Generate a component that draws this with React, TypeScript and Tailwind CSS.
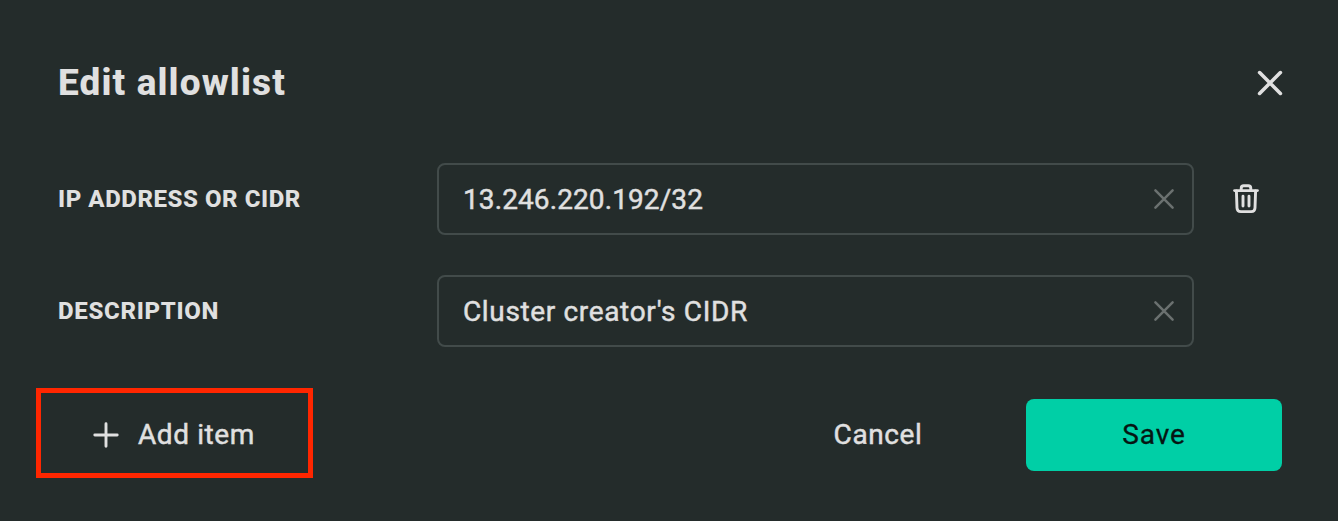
import React from "react";

function Cross({ size, reach, width, className }: { size: number; reach: number; width: number; className: string }) {
  const a = size / 2 - reach;
  const b = size / 2 + reach;
  return (
    <svg width={size} height={size} viewBox={`0 0 ${size} ${size}`} fill="none" stroke="currentColor" strokeWidth={width} strokeLinecap="round" className={className}>
      <path d={`M${a} ${a}L${b} ${b}M${b} ${a}L${a} ${b}`} />
    </svg>
  );
}

function Trash() {
  return (
    <svg width="32" height="32" viewBox="0 0 32 32" fill="none" stroke="currentColor" strokeWidth="2.9" strokeLinecap="round" strokeLinejoin="round">
      <path d="M4.6 7.6H27.4" />
      <path d="M11.2 7V5.4Q11.2 2.7 13.8 2.7H18.2Q20.8 2.7 20.8 5.4V7" />
      <path d="M6.4 8L7 25Q7.2 28.6 10.8 28.6H21.2Q24.8 28.6 25 25L25.6 8" />
      <path d="M13 13.2V23M19 13.2V23" />
    </svg>
  );
}

function Field({ label, labelSpacing, value, valueSpacing, removable }: { label: string; labelSpacing: string; value: string; valueSpacing: string; removable?: boolean }) {
  return (
    <div className="flex h-[72px] items-center">
      <div className={`w-[379px] text-2xl font-extrabold whitespace-nowrap ${labelSpacing}`}>{label}</div>
      <div className="flex h-[72px] w-[757px] items-center justify-between rounded-lg border-2 border-[#424b4a] pr-[14px] pl-6">
        <span className={`pt-0.5 text-[28px] leading-9 whitespace-nowrap [-webkit-text-stroke:0.45px] ${valueSpacing}`}>{value}</span>
        <Cross size={28} reach={8.6} width={2.5} className="text-[#6b7170]" />
      </div>
      {removable && (
        <button className="ml-9 flex">
          <Trash />
        </button>
      )}
    </div>
  );
}

export default function App() {
  return (
    <div className="flex h-[521px] w-[1338px] flex-col bg-[#242c2b] pr-14 pl-[58px] font-[Roboto,sans-serif] text-[#e0e0e0]">
      <header className="mt-[59px] flex h-12 items-center justify-between">
        <h1 className="text-[37px] font-extrabold tracking-[1.12px] whitespace-nowrap">Edit allowlist</h1>
        <button className="-mr-1">
          <Cross size={32} reach={10.4} width={3.6} className="block" />
        </button>
      </header>
      <main className="mt-14 flex flex-col gap-10">
        <Field label="IP ADDRESS OR CIDR" labelSpacing="tracking-[0.56px]" value="13.246.220.192/32" valueSpacing="tracking-[0.1px]" removable />
        <Field label="DESCRIPTION" labelSpacing="tracking-[0.7px]" value="Cluster creator's CIDR" valueSpacing="tracking-[0.65px]" />
      </main>
      <footer className="mt-[52px] flex h-[72px] items-center text-[28px]">
        <button className="relative flex h-[72px] w-[232px] items-center pl-[34px]">
          <svg width="28" height="28" viewBox="0 0 28 28" stroke="currentColor" strokeWidth="2.9" strokeLinecap="round">
            <path d="M2.8 14H25.2M14 2.8V25.2" />
          </svg>
          <span className="ml-[18px] tracking-[0.6px] whitespace-nowrap [-webkit-text-stroke:0.45px]">Add item</span>
          <span className="absolute -top-[11px] -left-[22px] h-[90px] w-[277px] border-5 border-[#ff2600]" />
        </button>
        <button className="ml-auto w-[208px] tracking-[0.6px] whitespace-nowrap [-webkit-text-stroke:0.45px]">Cancel</button>
        <button className="ml-11 h-[72px] w-64 rounded-lg bg-[#00cfa6] tracking-[0.9px] text-[#061512] [-webkit-text-stroke:0.3px]">Save</button>
      </footer>
    </div>
  );
}
